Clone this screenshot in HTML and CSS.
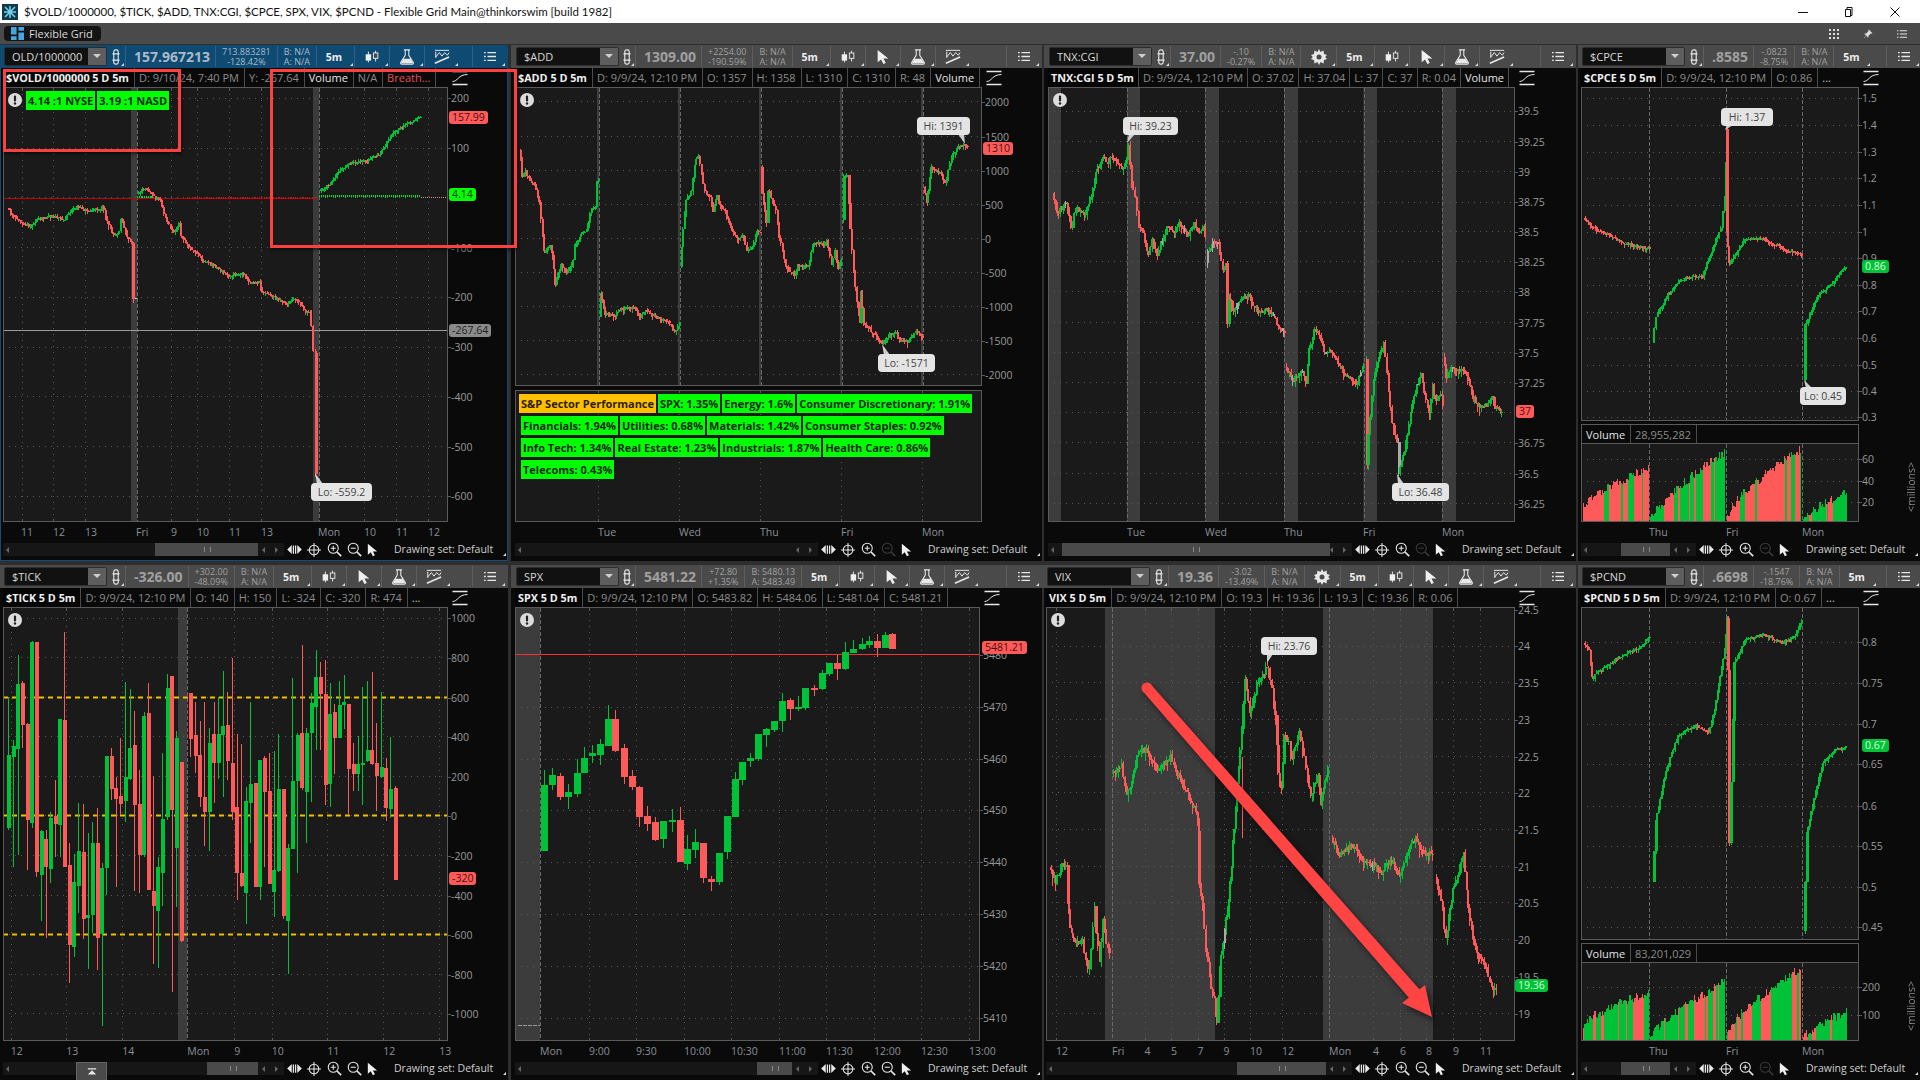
FILE: index.html
```html
<!DOCTYPE html>
<html lang="en">
<head>
<meta charset="utf-8">
<title>thinkorswim Flexible Grid</title>
<link rel="stylesheet" href="styles.css">
</head>
<body>
<svg class="sprite" aria-hidden="true">
  <symbol id="i-link" viewBox="0 0 10 18"><rect x="2.5" y="1" width="5" height="16" rx="2" fill="none" stroke="#e8e8e8" stroke-width="1.3"/><path d="M1 5.5h8M1 12.5h8" stroke="#e8e8e8" stroke-width="1.3"/></symbol>
  <symbol id="i-candle" viewBox="0 0 20 16"><path d="M6 2v12M14 1v12" stroke="#f0f0f0"/><rect x="3" y="5" width="6" height="7" fill="#f0f0f0"/><rect x="11.5" y="3.5" width="5" height="6" fill="#4a4a4a" stroke="#f0f0f0"/></symbol>
  <symbol id="i-flask" viewBox="0 0 18 18"><path d="M5.5 1h7M7 1v6L2 15c-.6 1 0 2 1 2h12c1 0 1.600-1 1-2L11 7V1" fill="none" stroke="#e8e8e8" stroke-width="1.2"/><path d="M5 11h8l3 5H2z" fill="#e8e8e8"/></symbol>
  <symbol id="i-draw" viewBox="0 0 20 18"><path d="M2 1.500h16M3 3v7M3 9l4-5 3 4 3-4 3 3 2-3" fill="none" stroke="#e8e8e8" stroke-width="1.100"/><path d="M2 16l16-7" stroke="#e8e8e8" stroke-width="1.800"/></symbol>
  <symbol id="i-menu" viewBox="0 0 14 12"><path d="M0 1.500h2M0 6h2M0 10.500h2M4 1.500h10M4 6h10M4 10.500h10" stroke="#e8e8e8" stroke-width="1.500"/></symbol>
  <symbol id="i-gear" viewBox="0 0 16 16"><path d="M8 0l1.500 3 3-1.500.5 3.400 3 1.100-1.800 2 1.800 2-3 1.100-.5 3.400-3-1.500L8 16l-1.500-3-3 1.500L3 11.100 0 10l1.800-2L0 6l3-1.100.5-3.400 3 1.500z" fill="#e8e8e8"/><circle cx="8" cy="8" r="2.500" fill="#4a4a4a"/></symbol>
  <symbol id="i-cursor" viewBox="0 0 14 18"><path d="M1 1v14l3.800-3.200L7.500 17l2.600-1.200-2.600-5H13z" fill="#f0f0f0"/></symbol>
  <symbol id="i-pan" viewBox="0 0 16 12"><path d="M0 6l5-5v10zM16 6l-5-5v10z" fill="#e8e8e8"/><path d="M6.800 1.500v9M9.200 1.500v9" stroke="#e8e8e8" stroke-width="1.400"/></symbol>
  <symbol id="i-cross" viewBox="0 0 16 16"><circle cx="8" cy="8" r="5.500" fill="none" stroke="#e8e8e8" stroke-width="1.200"/><path d="M8 0v16M0 8h16" stroke="#e8e8e8" stroke-width="1.200"/></symbol>
  <symbol id="i-zin" viewBox="0 0 18 18"><circle cx="7.500" cy="7.500" r="6" fill="none" stroke="currentColor" stroke-width="1.300"/><path d="M12 12l5 5" stroke="currentColor" stroke-width="2"/><path d="M4.500 7.500h6M7.500 4.500v6" stroke="currentColor" stroke-width="1.300"/></symbol>
  <symbol id="i-zout" viewBox="0 0 18 18"><circle cx="7.500" cy="7.500" r="6" fill="none" stroke="currentColor" stroke-width="1.300"/><path d="M12 12l5 5" stroke="currentColor" stroke-width="2"/><path d="M4.500 7.500h6" stroke="currentColor" stroke-width="1.300"/></symbol>
  <symbol id="i-scale" viewBox="0 0 16 16"><path d="M.5 1.500h15M.5 14.500h15" stroke="#e8e8e8" stroke-width="1.600"/><path d="M.5 11.500C6 11.500 6 4.500 15.500 4.500" fill="none" stroke="#e8e8e8"/></symbol>
  <symbol id="i-warn" viewBox="0 0 14 14"><circle cx="7" cy="7" r="7" fill="#dcdcdc"/><rect x="5.900" y="2.500" width="2.200" height="6" rx="1" fill="#222"/><circle cx="7" cy="10.500" r="1.200" fill="#222"/></symbol>
  <symbol id="i-up" viewBox="0 0 12 10"><path d="M1 1h10v1.500H1zM6 3.500l5 5H1z" fill="#e8e8e8"/></symbol>
</svg>

<header class="titlebar">
  <svg class="logo" viewBox="0 0 16 16"><rect width="16" height="16" fill="#12384c"/><path d="M3 3l10 10M13 3L3 13M8 2v12M2 8h12" stroke="#6fd0e8" stroke-width="1.600"/></svg>
  <span class="title-text">$VOLD/1000000, $TICK, $ADD, TNX:CGI, $CPCE, SPX, VIX, $PCND - Flexible Grid Main@thinkorswim [build 1982]</span>
  <div class="winctl">
    <svg class="win" viewBox="0 0 12 12"><path d="M1 6.500h10" stroke="#111"/></svg>
    <svg class="win" viewBox="0 0 12 12"><path d="M4 3V1.500h5v8H7.500M2.500 3.500h5v7h-5z" fill="none" stroke="#111"/></svg>
    <svg class="win" viewBox="0 0 12 12"><path d="M1.500 1.500l9 9M10.500 1.500l-9 9" stroke="#111"/></svg>
  </div>
</header>

<div class="toolbar">
  <div class="gridtab">
    <svg class="tabicon" viewBox="0 0 14 14"><path d="M0 0h6v8H0zM8 0h6v4H8zM8 6h6v8H8zM0 10h6v4H0z" fill="#45a6e0"/></svg>
    <span>Flexible Grid</span>
  </div>
  <div class="toolbar-right">
    <svg class="barico" viewBox="0 0 10 10"><path d="M0 0h2v2H0zM4 0h2v2H4zM8 0h2v2H8zM0 4h2v2H0zM4 4h2v2H4zM8 4h2v2H8zM0 8h2v2H0zM4 8h2v2H4zM8 8h2v2H8z" fill="#ddd"/></svg>
    <svg class="barico" viewBox="0 0 12 12"><path d="M7 1l4 4-2 .5L6.500 8 6 10 2 6l2-.5L6.500 3zM3 9l-2 2" fill="#ddd" stroke="#ddd" stroke-width=".6"/></svg>
    <svg class="barico" viewBox="0 0 14 12"><use href="#i-menu"/></svg>
  </div>
</div>

<main class="grid">

  <section class="panel active col-a">
    <div class="head">
      <div class="symbol"><span>OLD/1000000</span><i class="drop"></i></div>
      <div class="tool link"><svg class="ic-link"><use href="#i-link"/></svg></div>
      <div class="last">157.967213</div>
      <div class="pair"><span>713.883281</span><span>-128.42%</span></div>
      <div class="pair"><span>B: N/A</span><span>A: N/A</span></div>
      <div class="tool tf">5m</div>
      <div class="tool"><svg class="ic"><use href="#i-candle"/></svg></div>
      <div class="tool"><svg class="ic"><use href="#i-flask"/></svg></div>
      <div class="tool"><svg class="ic"><use href="#i-draw"/></svg></div>
      <div class="tool menu"><svg class="ic-menu"><use href="#i-menu"/></svg></div>
    </div>
    <div class="info">
      <div class="cells">
        <span class="cell ttl">$VOLD/1000000 5 D 5m</span><span class="cell">D: 9/10/24, 7:40 PM</span><span class="cell">Y: -267.64</span><span class="cell lit">Volume</span><span class="cell">N/A</span><span class="cell red">Breath...</span>
      </div>
      <div class="scale"><svg class="ic-scale"><use href="#i-scale"/></svg></div>
    </div>
    <div class="body">
      <div class="plots">
        <div class="plot" data-chart="vold">
          <svg class="warn"><use href="#i-warn"/></svg>
          <div class="breadth"><span class="chip">4.14 :1 NYSE</span><span class="chip">3.19 :1 NASD</span></div>
        </div>
      </div>
      <div class="axis"></div>
    </div>
    <div class="time"></div>
    <div class="scroll">
      <div class="track"><i class="arr l"></i><div class="thumb thumb-vold"></div><i class="arr r1"></i><i class="arr r2"></i></div>
      <div class="nav"><svg class="n-pan"><use href="#i-pan"/></svg><svg class="n-ic"><use href="#i-cross"/></svg><svg class="n-ic zoom"><use href="#i-zin"/></svg><svg class="n-ic zoom"><use href="#i-zout"/></svg><svg class="n-cur"><use href="#i-cursor"/></svg></div>
      <div class="drawset">Drawing set: Default</div>
    </div>
  </section>

  <section class="panel col-b">
    <div class="head">
      <div class="symbol"><span>$ADD</span><i class="drop"></i></div>
      <div class="tool link"><svg class="ic-link"><use href="#i-link"/></svg></div>
      <div class="last">1309.00</div>
      <div class="pair"><span>+2254.00</span><span>-190.59%</span></div>
      <div class="pair"><span>B: N/A</span><span>A: N/A</span></div>
      <div class="tool tf">5m</div>
      <div class="tool"><svg class="ic"><use href="#i-candle"/></svg></div>
      <div class="tool"><svg class="ic"><use href="#i-cursor"/></svg></div>
      <div class="tool"><svg class="ic"><use href="#i-flask"/></svg></div>
      <div class="tool"><svg class="ic"><use href="#i-draw"/></svg></div>
      <div class="tool menu"><svg class="ic-menu"><use href="#i-menu"/></svg></div>
    </div>
    <div class="info">
      <div class="cells">
        <span class="cell ttl">$ADD 5 D 5m</span><span class="cell">D: 9/9/24, 12:10 PM</span><span class="cell">O: 1357</span><span class="cell">H: 1358</span><span class="cell">L: 1310</span><span class="cell">C: 1310</span><span class="cell">R: 48</span><span class="cell lit">Volume</span>
      </div>
      <div class="scale"><svg class="ic-scale"><use href="#i-scale"/></svg></div>
    </div>
    <div class="body">
      <div class="plots">
        <div class="plot" data-chart="add"><svg class="warn"><use href="#i-warn"/></svg></div>
        <div class="plot study sectors" data-chart="addStudy">
          <div class="chips">
            <span class="chip head-chip">S&amp;P Sector Performance</span><span class="chip">SPX: 1.35%</span><span class="chip">Energy: 1.6%</span><span class="chip">Consumer Discretionary: 1.91%</span>
          </div>
          <div class="chips inset">
            <span class="chip">Financials: 1.94%</span><span class="chip">Utilities: 0.68%</span><span class="chip">Materials: 1.42%</span><span class="chip">Consumer Staples: 0.92%</span>
          </div>
          <div class="chips inset">
            <span class="chip">Info Tech: 1.34%</span><span class="chip">Real Estate: 1.23%</span><span class="chip">Industrials: 1.87%</span><span class="chip">Health Care: 0.86%</span>
          </div>
          <div class="chips inset">
            <span class="chip">Telecoms: 0.43%</span>
          </div>
        </div>
      </div>
      <div class="axis"></div>
    </div>
    <div class="time"></div>
    <div class="scroll">
      <div class="track"><i class="arr l"></i><i class="arr r1"></i><i class="arr r2"></i></div>
      <div class="nav"><svg class="n-pan"><use href="#i-pan"/></svg><svg class="n-ic"><use href="#i-cross"/></svg><svg class="n-ic zoom"><use href="#i-zin"/></svg><svg class="n-ic zoom dim"><use href="#i-zout"/></svg><svg class="n-cur"><use href="#i-cursor"/></svg></div>
      <div class="drawset">Drawing set: Default</div>
    </div>
  </section>

  <section class="panel col-c tnx">
    <div class="head">
      <div class="symbol"><span>TNX:CGI</span><i class="drop"></i></div>
      <div class="tool link"><svg class="ic-link"><use href="#i-link"/></svg></div>
      <div class="last">37.00</div>
      <div class="pair"><span>-.10</span><span>-0.27%</span></div>
      <div class="pair"><span>B: N/A</span><span>A: N/A</span></div>
      <div class="tool gear"><svg class="ic"><use href="#i-gear"/></svg></div>
      <div class="tool tf">5m</div>
      <div class="tool"><svg class="ic"><use href="#i-candle"/></svg></div>
      <div class="tool"><svg class="ic"><use href="#i-cursor"/></svg></div>
      <div class="tool"><svg class="ic"><use href="#i-flask"/></svg></div>
      <div class="tool"><svg class="ic"><use href="#i-draw"/></svg></div>
      <div class="tool menu"><svg class="ic-menu"><use href="#i-menu"/></svg></div>
    </div>
    <div class="info">
      <div class="cells">
        <span class="cell ttl">TNX:CGI 5 D 5m</span><span class="cell">D: 9/9/24, 12:10 PM</span><span class="cell">O: 37.02</span><span class="cell">H: 37.04</span><span class="cell">L: 37</span><span class="cell">C: 37</span><span class="cell">R: 0.04</span><span class="cell lit">Volume</span>
      </div>
      <div class="scale"><svg class="ic-scale"><use href="#i-scale"/></svg></div>
    </div>
    <div class="body">
      <div class="plots">
        <div class="plot" data-chart="tnx"><svg class="warn"><use href="#i-warn"/></svg></div>
      </div>
      <div class="axis"></div>
    </div>
    <div class="time"></div>
    <div class="scroll">
      <div class="track"><i class="arr l"></i><div class="thumb thumb-tnx"></div><i class="arr r1"></i><i class="arr r2"></i></div>
      <div class="nav"><svg class="n-pan"><use href="#i-pan"/></svg><svg class="n-ic"><use href="#i-cross"/></svg><svg class="n-ic zoom"><use href="#i-zin"/></svg><svg class="n-ic zoom dim"><use href="#i-zout"/></svg><svg class="n-cur"><use href="#i-cursor"/></svg></div>
      <div class="drawset">Drawing set: Default</div>
    </div>
  </section>

  <section class="panel col-d">
    <div class="head">
      <div class="symbol"><span>$CPCE</span><i class="drop"></i></div>
      <div class="tool link"><svg class="ic-link"><use href="#i-link"/></svg></div>
      <div class="last">.8585</div>
      <div class="pair"><span>-.0823</span><span>-8.75%</span></div>
      <div class="pair"><span>B: N/A</span><span>A: N/A</span></div>
      <div class="tool tf">5m</div>
      <div class="tool menu"><svg class="ic-menu"><use href="#i-menu"/></svg></div>
    </div>
    <div class="info">
      <div class="cells">
        <span class="cell ttl">$CPCE 5 D 5m</span><span class="cell">D: 9/9/24, 12:10 PM</span><span class="cell">O: 0.86</span><span class="cell plain">...</span>
      </div>
      <div class="scale"><svg class="ic-scale"><use href="#i-scale"/></svg></div>
    </div>
    <div class="body">
      <div class="plots">
        <div class="plot" data-chart="cpce"></div>
        <div class="studyhead"><span class="cell lit">Volume</span><span class="cell">28,955,282</span></div>
        <div class="plot volume" data-chart="cpceVol"></div>
      </div>
      <div class="axis"><span class="units">&lt;millions&gt;</span></div>
    </div>
    <div class="time"></div>
    <div class="scroll">
      <div class="track"><i class="arr l"></i><div class="thumb thumb-d"></div><i class="arr r1"></i><i class="arr r2"></i></div>
      <div class="nav"><svg class="n-pan"><use href="#i-pan"/></svg><svg class="n-ic"><use href="#i-cross"/></svg><svg class="n-ic zoom"><use href="#i-zin"/></svg><svg class="n-ic zoom dim"><use href="#i-zout"/></svg><svg class="n-cur"><use href="#i-cursor"/></svg></div>
      <div class="drawset">Drawing set: Default</div>
    </div>
  </section>

  <section class="panel bottom col-a">
    <div class="head">
      <div class="symbol"><span>$TICK</span><i class="drop"></i></div>
      <div class="tool link"><svg class="ic-link"><use href="#i-link"/></svg></div>
      <div class="last">-326.00</div>
      <div class="pair"><span>+302.00</span><span>-48.09%</span></div>
      <div class="pair"><span>B: N/A</span><span>A: N/A</span></div>
      <div class="tool tf">5m</div>
      <div class="tool"><svg class="ic"><use href="#i-candle"/></svg></div>
      <div class="tool"><svg class="ic"><use href="#i-cursor"/></svg></div>
      <div class="tool"><svg class="ic"><use href="#i-flask"/></svg></div>
      <div class="tool"><svg class="ic"><use href="#i-draw"/></svg></div>
      <div class="tool menu"><svg class="ic-menu"><use href="#i-menu"/></svg></div>
    </div>
    <div class="info">
      <div class="cells">
        <span class="cell ttl">$TICK 5 D 5m</span><span class="cell">D: 9/9/24, 12:10 PM</span><span class="cell">O: 140</span><span class="cell">H: 150</span><span class="cell">L: -324</span><span class="cell">C: -320</span><span class="cell">R: 474</span><span class="cell plain">...</span>
      </div>
      <div class="scale"><svg class="ic-scale"><use href="#i-scale"/></svg></div>
    </div>
    <div class="body">
      <div class="plots">
        <div class="plot" data-chart="tick"><svg class="warn"><use href="#i-warn"/></svg></div>
      </div>
      <div class="axis"></div>
    </div>
    <div class="time"></div>
    <div class="scroll">
      <div class="track"><i class="arr l"></i><div class="thumb thumb-tick"></div><i class="arr r1"></i><i class="arr r2"></i></div>
      <div class="nav"><svg class="n-pan"><use href="#i-pan"/></svg><svg class="n-ic"><use href="#i-cross"/></svg><svg class="n-ic zoom"><use href="#i-zin"/></svg><svg class="n-ic zoom"><use href="#i-zout"/></svg><svg class="n-cur"><use href="#i-cursor"/></svg></div>
      <div class="drawset">Drawing set: Default</div>
    </div>
    <div class="collapse"><svg class="ic-up"><use href="#i-up"/></svg></div>
  </section>

  <section class="panel bottom col-b spx">
    <div class="head">
      <div class="symbol"><span>SPX</span><i class="drop"></i></div>
      <div class="tool link"><svg class="ic-link"><use href="#i-link"/></svg></div>
      <div class="last">5481.22</div>
      <div class="pair"><span>+72.80</span><span>+1.35%</span></div>
      <div class="pair"><span>B: 5480.13</span><span>A: 5483.49</span></div>
      <div class="tool tf">5m</div>
      <div class="tool"><svg class="ic"><use href="#i-candle"/></svg></div>
      <div class="tool"><svg class="ic"><use href="#i-cursor"/></svg></div>
      <div class="tool"><svg class="ic"><use href="#i-flask"/></svg></div>
      <div class="tool"><svg class="ic"><use href="#i-draw"/></svg></div>
      <div class="tool menu"><svg class="ic-menu"><use href="#i-menu"/></svg></div>
    </div>
    <div class="info">
      <div class="cells">
        <span class="cell ttl">SPX 5 D 5m</span><span class="cell">D: 9/9/24, 12:10 PM</span><span class="cell">O: 5483.82</span><span class="cell">H: 5484.06</span><span class="cell">L: 5481.04</span><span class="cell">C: 5481.21</span>
      </div>
      <div class="scale"><svg class="ic-scale"><use href="#i-scale"/></svg></div>
    </div>
    <div class="body">
      <div class="plots">
        <div class="plot" data-chart="spx"><svg class="warn"><use href="#i-warn"/></svg></div>
      </div>
      <div class="axis"></div>
    </div>
    <div class="time"></div>
    <div class="scroll">
      <div class="track"><i class="arr l"></i><div class="thumb thumb-spx"></div><i class="arr r1"></i><i class="arr r2"></i></div>
      <div class="nav"><svg class="n-pan"><use href="#i-pan"/></svg><svg class="n-ic"><use href="#i-cross"/></svg><svg class="n-ic zoom"><use href="#i-zin"/></svg><svg class="n-ic zoom"><use href="#i-zout"/></svg><svg class="n-cur"><use href="#i-cursor"/></svg></div>
      <div class="drawset">Drawing set: Default</div>
    </div>
  </section>

  <section class="panel bottom col-c vix">
    <div class="head">
      <div class="symbol"><span>VIX</span><i class="drop"></i></div>
      <div class="tool link"><svg class="ic-link"><use href="#i-link"/></svg></div>
      <div class="last">19.36</div>
      <div class="pair"><span>-3.02</span><span>-13.49%</span></div>
      <div class="pair"><span>B: N/A</span><span>A: N/A</span></div>
      <div class="tool gear"><svg class="ic"><use href="#i-gear"/></svg></div>
      <div class="tool tf">5m</div>
      <div class="tool"><svg class="ic"><use href="#i-candle"/></svg></div>
      <div class="tool"><svg class="ic"><use href="#i-cursor"/></svg></div>
      <div class="tool"><svg class="ic"><use href="#i-flask"/></svg></div>
      <div class="tool"><svg class="ic"><use href="#i-draw"/></svg></div>
      <div class="tool menu"><svg class="ic-menu"><use href="#i-menu"/></svg></div>
    </div>
    <div class="info">
      <div class="cells">
        <span class="cell ttl">VIX 5 D 5m</span><span class="cell">D: 9/9/24, 12:10 PM</span><span class="cell">O: 19.3</span><span class="cell">H: 19.36</span><span class="cell">L: 19.3</span><span class="cell">C: 19.36</span><span class="cell">R: 0.06</span>
      </div>
      <div class="scale"><svg class="ic-scale"><use href="#i-scale"/></svg></div>
    </div>
    <div class="body">
      <div class="plots">
        <div class="plot" data-chart="vix"><svg class="warn"><use href="#i-warn"/></svg></div>
      </div>
      <div class="axis"></div>
    </div>
    <div class="time"></div>
    <div class="scroll">
      <div class="track"><i class="arr l"></i><div class="thumb thumb-vix"></div><i class="arr r1"></i><i class="arr r2"></i></div>
      <div class="nav"><svg class="n-pan"><use href="#i-pan"/></svg><svg class="n-ic"><use href="#i-cross"/></svg><svg class="n-ic zoom"><use href="#i-zin"/></svg><svg class="n-ic zoom"><use href="#i-zout"/></svg><svg class="n-cur"><use href="#i-cursor"/></svg></div>
      <div class="drawset">Drawing set: Default</div>
    </div>
  </section>

  <section class="panel bottom col-d">
    <div class="head">
      <div class="symbol"><span>$PCND</span><i class="drop"></i></div>
      <div class="tool link"><svg class="ic-link"><use href="#i-link"/></svg></div>
      <div class="last">.6698</div>
      <div class="pair"><span>-.1547</span><span>-18.76%</span></div>
      <div class="pair"><span>B: N/A</span><span>A: N/A</span></div>
      <div class="tool tf">5m</div>
      <div class="tool menu"><svg class="ic-menu"><use href="#i-menu"/></svg></div>
    </div>
    <div class="info">
      <div class="cells">
        <span class="cell ttl">$PCND 5 D 5m</span><span class="cell">D: 9/9/24, 12:10 PM</span><span class="cell">O: 0.67</span><span class="cell plain">...</span>
      </div>
      <div class="scale"><svg class="ic-scale"><use href="#i-scale"/></svg></div>
    </div>
    <div class="body">
      <div class="plots">
        <div class="plot" data-chart="pcnd"></div>
        <div class="studyhead"><span class="cell lit">Volume</span><span class="cell">83,201,029</span></div>
        <div class="plot volume" data-chart="pcndVol"></div>
      </div>
      <div class="axis"><span class="units">&lt;millions&gt;</span></div>
    </div>
    <div class="time"></div>
    <div class="scroll">
      <div class="track"><i class="arr l"></i><div class="thumb thumb-d"></div><i class="arr r1"></i><i class="arr r2"></i></div>
      <div class="nav"><svg class="n-pan"><use href="#i-pan"/></svg><svg class="n-ic"><use href="#i-cross"/></svg><svg class="n-ic zoom"><use href="#i-zin"/></svg><svg class="n-ic zoom dim"><use href="#i-zout"/></svg><svg class="n-cur"><use href="#i-cursor"/></svg></div>
      <div class="drawset">Drawing set: Default</div>
    </div>
  </section>
</main>

<div class="markup box-one"></div>
<div class="markup box-two"></div>
<svg class="arrow" viewBox="0 0 1920 1080">
  <circle cx="1147" cy="688" r="5.500" fill="#ff4444"/>
  <path d="M1143 691.500 1151 684.500 1420 990 1410 999zM1402 1003 1425 985 1432 1017z" fill="#ff4444"/>
</svg>

<script src="app.js"></script>
</body>
</html>
```

FILE: styles.css
```css
* { box-sizing: border-box; }
html, body { margin: 0; padding: 0; }
body {
  width: 1920px; height: 1080px; overflow: hidden; position: relative;
  background: #2e2e2e; color: #999;
  font-family: "Open Sans", "Liberation Sans", sans-serif; font-size: 10.5px;
}
.sprite { display: none; }

.titlebar {
  height: 23px; background: #fff; color: #111; display: flex; align-items: center;
  font-family: "Lato", "Open Sans", sans-serif; font-size: 11.5px;
}
.logo { width: 16px; height: 16px; margin: 0 6px 0 2px; }
.title-text { flex: 1; }
.winctl { display: flex; gap: 34px; padding-right: 19px; }
.win { width: 12px; height: 12px; }

.toolbar {
  height: 21px; background: #4a4a4a; display: flex; align-items: center; justify-content: space-between;
  padding-left: 4px;
}
.gridtab {
  width: 97px; height: 15px; background: #141414; border-radius: 4px; color: #d8d8d8;
  display: flex; align-items: center; gap: 5px; padding-left: 7px; font-size: 11px;
}
.tabicon { width: 13px; height: 13px; }
.toolbar-right { display: flex; align-items: center; gap: 24px; padding-right: 13px; }
.barico { width: 10px; height: 10px; }

.grid {
  display: grid; height: 1036px;
  grid-template-columns: 510px 533px 535px 342px;
  grid-template-rows: 520px 516px;
}
.panel {
  position: relative; display: flex; flex-direction: column; min-width: 0;
  margin-top: 1px; margin-bottom: 3px; padding-bottom: 5px; background: #0a0a0a;
  --axis: 60px;
}
.panel.bottom { margin-bottom: 0; }
.col-a { padding-left: 3px; margin-right: 2px; }
.col-b { padding-left: 4px; margin-left: 1px; margin-right: 1px; }
.col-c { padding-left: 4px; margin-left: 1px; margin-right: 2px; --axis: 61px; }
.col-d { padding-left: 3px; --axis: 61px; }
.spx { --axis: 62px; }
.vix { padding-left: 2px; }
.panel.active { box-shadow: inset 1px 0 0 #0e4e78, inset -1px 0 0 #0e4e78, inset 0 -1px 0 #0e4e78; }

.head {
  height: 23px; flex: none; display: flex; align-items: stretch; background: #4a4a4a;
  margin-left: -3px; padding-left: 4px; padding-top: 1px; padding-bottom: 1px;
  color: #a0a0a0;
}
.panel:not(.col-a):not(.col-d) .head { margin-left: -4px; padding-left: 5px; }
.active .head { background: #0e4a72; color: #a9bbc9; }
.symbol {
  width: 103px; background: #111; border: 1px solid #2c2c2c; border-radius: 2px; color: #d8d8d8;
  display: flex; align-items: center; justify-content: space-between; padding-left: 7px;
  font-size: 11px; margin: 1px 0;
}
.drop {
  width: 18px; height: 100%; background: #5e5e5e; position: relative; display: block;
}
.drop::after {
  content: ""; position: absolute; left: 5px; top: 6px;
  border-left: 4px solid transparent; border-right: 4px solid transparent; border-top: 4px solid #cfcfcf;
}
.tool {
  width: 35px; display: flex; align-items: center; justify-content: center; position: relative;
  border-left: 1px solid #5e5e5e; color: #eee; font-weight: 700; font-size: 10.5px;
}
.active .tool { border-left-color: #2c6288; }
.tool::after {
  content: ""; position: absolute; right: 1px; bottom: 1px; border-left: 3px solid transparent; border-bottom: 3px solid #ddd;
}
.link { width: 18px; border-left: 0; }
.col-b .link { width: 16px; }
.tf { width: 38px; padding-right: 3px; }
.gear { width: 31px; }
.col-c .gear { width: 36px; }
.menu { margin-left: auto; margin-right: 2px; width: 34px; }
.col-d .menu { margin-right: 0; }
.ic { width: 18px; height: 16px; }
.ic-link { width: 10px; height: 16px; }
.ic-menu { width: 12px; height: 11px; }
.last {
  display: flex; align-items: center; padding: 0 5px 0 8px; border-left: 1px solid #5e5e5e;
  font-size: 14px; font-weight: 700;
}
.active .last, .active .pair { border-left-color: #2c6288; }
.pair {
  display: flex; flex-direction: column; align-items: center; justify-content: center; padding: 0 6px;
  border-left: 1px solid #5e5e5e; font-size: 9px; line-height: 10px;
}

.info { height: 20px; flex: none; display: flex; }
.cells {
  flex: 1; display: flex; min-width: 0; overflow: hidden; background: #0a0a0a;
  border-bottom: 1px solid #5a5a5a;
}
.cell {
  display: flex; align-items: center; padding: 0 5px 0 4px; border-right: 1px solid #4c4c4c;
  color: #8c8c8c; font-size: 11px; white-space: nowrap;
}
.tnx .cell { padding-right: 4px; }
.cell.ttl { color: #f0f0f0; font-weight: 700; font-size: 10.8px; padding-left: 3px; background: #050505; }
.cell.lit { color: #e4e4e4; }
.cell.red { color: #e0525a; }
.cell.plain { border-right: 0; color: #c8c8c8; }
.scale { width: var(--axis); display: flex; align-items: center; padding-left: 4px; }
.ic-scale { width: 16px; height: 16px; }

.body { flex: 1; min-height: 0; display: flex; }
.plots { flex: 1; min-width: 0; display: flex; flex-direction: column; }
.plot {
  flex: 1; min-height: 0; position: relative; overflow: hidden; background: #1a1a1a;
  border: 1px solid #5a5a5a; border-top: 0;
}
.plotsvg { position: absolute; left: -1px; top: 0; display: block; }
.study .plotsvg { top: -1px; }
.plotsvg .crisp { shape-rendering: crispEdges; }
.study { flex: none; height: 132px; margin-top: 4px; border-top: 1px solid #5a5a5a; }
.volume { flex: none; height: 78px; }
.studyhead {
  flex: none; height: 20px; margin-top: 3px; display: flex; background: #0a0a0a;
  border: 1px solid #5a5a5a;
}
.axis { width: var(--axis); position: relative; flex: none; }
.units {
  position: absolute; right: 2px; bottom: 10px; writing-mode: vertical-rl; transform: rotate(180deg);
  color: #8a8a8a; font-size: 10.5px;
}
.ylab {
  position: absolute; left: 3px; transform: translateY(-50%); color: #999; font-size: 10.5px; line-height: 12px; white-space: nowrap;
}
.ylab::before {
  content: ""; position: absolute; left: -3px; top: 6px; width: 3px; height: 1px; background: #5a5a5a;
}

.time { height: 21px; flex: none; position: relative; }
.xlab {
  position: absolute; top: 3px; color: #8a9097; font-size: 10.5px; line-height: 14px; white-space: nowrap;
}

.scroll { height: 13px; flex: none; display: flex; align-items: center; }
.track { flex: 1; min-width: 0; height: 13px; background: #161616; position: relative; }
.thumb { position: absolute; top: 0; height: 13px; background: #4a4a4a; }
.thumb::after {
  content: ""; position: absolute; left: 50%; top: 4px; width: 5px; height: 5px; margin-left: -3px;
  border-left: 1px solid #888; border-right: 1px solid #888;
}
.thumb-vold { left: 152px; right: 26px; }
.thumb-tick { left: 204px; right: 26px; }
.thumb-tnx { left: 14px; right: 22px; }
.thumb-spx { left: 242px; right: 26px; }
.thumb-vix { left: 191px; right: 26px; }
.thumb-d { left: 40px; right: 26px; }
.arr { position: absolute; top: 4px; border-top: 3px solid transparent; border-bottom: 3px solid transparent; }
.arr.l { left: 3px; border-right: 3px solid #666; }
.arr.r1 { right: 19px; border-right: 3px solid #666; }
.arr.r2 { right: 6px; border-left: 3px solid #666; }
.nav { width: 94px; display: flex; align-items: center; justify-content: space-between; padding: 0 0 0 3px; color: #e8e8e8; }
.n-pan { width: 15px; height: 11px; }
.n-ic { width: 14px; height: 14px; }
.n-ic.zoom { width: 15px; height: 15px; }
.n-ic.dim { color: #3a3a3a; }
.n-cur { width: 11px; height: 14px; }
.drawset {
  width: 130px; padding-left: 16px; color: #cfcfcf; font-size: 10.5px; line-height: 13px; white-space: nowrap; position: relative;
}
.drawset::after {
  content: ""; position: absolute; right: 2px; bottom: 0; border-left: 3px solid transparent; border-bottom: 3px solid #ddd;
}
.collapse {
  position: absolute; left: 76px; bottom: 0; width: 31px; height: 18px; background: #4a4a4a; border: 1px solid #666; border-bottom: 0;
  display: flex; align-items: center; justify-content: center;
}
.ic-up { width: 10px; height: 9px; }

.warn { position: absolute; left: 4px; top: 5px; width: 14px; height: 14px; }
.breadth { position: absolute; left: 22px; top: 3px; display: flex; gap: 2px; }
.chip {
  background: #00ff00; color: #0a2a0a; font-weight: 700; font-size: 11px; line-height: 19px; padding: 0 2px; white-space: nowrap;
}
.head-chip { background: #ffc000; color: #2a2000; }
.sectors { padding: 3px 0 0 3px; display: flex; flex-direction: column; gap: 3px; flex: none; }
.chips { display: flex; gap: 2px; position: relative; }
.chips.inset { padding-left: 2px; }

.bubble {
  position: absolute; background: #e4e4e4; color: #444; border-radius: 4px; text-align: center;
  font-size: 10.5px; line-height: 18px; height: 18px; white-space: nowrap;
}
.ptag {
  position: absolute; border-radius: 3px; padding: 0 3px; font-size: 10.5px; line-height: 13px; height: 13px; white-space: nowrap; color: #4a1010;
}
.ptag.red { background: #ff5a5a; }
.ptag.green { background: #00c238; color: #d8ffd8; }
.ptag.lime { background: #00ff00; color: #083008; }
.ptag.gray { background: #8a8a8a; color: #222; }

.markup { position: absolute; border: 3px solid #ff4040; box-shadow: 1px 2px 3px rgba(0,0,0,.5); pointer-events: none; }
.box-one { left: 3px; top: 69px; width: 178px; height: 83px; }
.box-two { left: 270px; top: 69px; width: 247px; height: 179px; }
.arrow { position: absolute; left: 0; top: 0; width: 1920px; height: 1080px; pointer-events: none; filter: drop-shadow(3px 4px 3px rgba(0,0,0,.55)); }
```

FILE: app.js
```js
const GREEN = '#00c238', RED = '#ff5a5a', BAND = '#3c3c3c', GRID = '#5a5a5a';
let seed = 11;
const rnd = () => (seed = (seed * 16807) % 2147483647) / 2147483647;
const conv = (ox, oy, sx, sy) => segs => segs.map(s => s.map(([x, y]) => [ox + x / sx, oy + y / (sy || sx)]));
const rect = (x, y, w, h, c) => `<rect x="${x.toFixed(2)}" y="${y.toFixed(2)}" width="${w}" height="${h.toFixed(2)}" fill="${c}"/>`;

function walk(segs, o = {}) {
  const pitch = o.pitch || 1.7, w = o.w || 2, noise = o.noise == null ? 3 : o.noise, gray = o.gray || 0;
  let out = '';
  segs.forEach(pts => {
    let prev = pts[0][1];
    for (let i = 1; i < pts.length; i++) {
      const [x0, y0] = pts[i - 1], [x1, y1] = pts[i];
      const n = Math.max(1, Math.round((x1 - x0) / pitch));
      for (let j = 1; j <= n; j++) {
        const x = x0 + (x1 - x0) * j / n;
        const y = y0 + (y1 - y0) * j / n + (rnd() - .5) * noise;
        const top = Math.min(prev, y), bot = Math.max(prev, y);
        const c = rnd() < gray ? '#aaaaaa' : (y < prev ? GREEN : RED);
        const big = bot - top > 25 ? 1 : 0;
        out += rect(x, top - rnd() * noise * .8, 1, bot - top + rnd() * noise * 1.6 + 1, c);
        out += rect(x - (w - 1) / 2, top, w + big, Math.max(1.6, bot - top), c);
        prev = y;
      }
    }
  });
  return out;
}

function candles(list, ox, oy, sx, sy, w) {
  return list.map(([x, g, wt, wb, bt, bb]) => {
    const c = g ? GREEN : RED, px = ox + x / sx;
    return rect(Math.round(px), oy + wt / sy, 1, (wb - wt) / sy, c) +
      rect(Math.round(px - (w - 1) / 2), oy + bt / sy, w, Math.max(1, (bb - bt) / sy), c);
  }).join('');
}

function volBars(segs, base, pitch) {
  let out = '';
  segs.forEach(([x0, x1, y0, y1, pG0, pG1]) => {
    const n = Math.round((x1 - x0) / pitch);
    let run = 0, col = RED;
    for (let i = 0; i <= n; i++) {
      const t = i / n, x = x0 + (x1 - x0) * t;
      const top = y0 + (y1 - y0) * Math.pow(t, .75) + (rnd() - .3) * 9;
      if (run-- <= 0) {
        const pg = pG0 + (pG1 - pG0) * t;
        col = rnd() < pg ? GREEN : RED;
        run = Math.floor(rnd() * 4);
      }
      out += rect(x, top, 1.3, Math.max(0, base - top), col);
    }
  });
  return out;
}

const z7 = conv(0, 160, 3), z9 = conv(510, 70, 2.958, 3), z12 = conv(1040, 100, 2.958, 3), z11 = conv(1040, 600, 2.958, 3), ref = conv(0, 0, 1 / 1.2245);

const TICK = [[25,1,290,690,465,685],[39,1,420,800,438,470],[53,1,165,765,252,448],[66,0,243,445,250,375],[81,0,370,810,372,660],[95,1,123,685,126,670],[108,0,126,832,126,815],[123,1,690,962,693,825],[137,0,690,1015,718,800],[150,1,636,850,654,806],[165,0,540,770,648,672],[179,1,357,770,357,675],[193,0,96,800,360,800],[207,0,730,1148,795,1035],[221,1,762,1072,846,1040],[235,1,610,940,753,858],[249,0,612,1018,756,957],[263,1,700,1108,945,955],[277,1,665,1000,729,945],[291,0,624,1110,729,1014],[305,1,790,1277,804,1002],[319,1,468,885,468,804],[333,0,445,600,468,567],[347,0,530,860,564,597],[361,0,415,645,588,612],[375,1,245,665,531,603],[389,1,267,540,444,537],[403,0,333,873,435,615],[417,0,510,880,612,765],[431,1,335,770,348,765],[445,0,250,870,339,870],[459,0,528,1092,873,918],[473,1,770,1103,801,933],[487,1,460,918,657,819],[501,1,222,660,264,651],[515,0,228,1175,228,630],[528,1,393,920,414,744],[543,0,486,1025,486,1023],[570,0,280,470,279,417],[585,0,305,520,405,468],[599,0,363,620,465,591],[612,0,305,738,591,636],[627,1,385,752,429,636],[641,0,305,610,402,489],[654,1,290,537,402,489],[668,1,212,590,378,405],[682,0,277,540,375,483],[696,0,173,660,489,636],[710,0,402,900,621,819],[723,0,432,860,819,858],[737,1,560,972,603,879],[751,1,306,730,552,609],[765,0,550,860,549,861],[779,1,480,900,480,861],[793,0,467,800,474,576],[807,0,460,852,573,852],[821,1,452,950,810,876],[835,1,402,815,567,813],[849,0,567,958,567,948],[863,1,732,1122,744,963],[877,1,234,748,543,747],[891,1,400,820,405,543],[905,0,135,570,399,565],[919,1,385,730,399,576],[933,1,280,605,309,399],[947,1,150,450,231,321],[961,0,186,450,231,282],[975,0,180,615,282,555],[989,1,250,620,342,552],[1003,0,312,522,336,414],[1017,1,243,414,315,414],[1031,1,225,388,306,316],[1045,0,312,642,312,507],[1059,0,430,573,492,522],[1073,1,408,573,492,522],[1087,1,261,615,489,495],[1101,1,243,486,450,483],[1115,0,216,495,450,492],[1129,0,369,633,489,528],[1143,1,276,535,501,531],[1157,0,474,662,504,624],[1171,1,411,654,567,627],[1185,0,558,840,564,840]];

const SPX = [[102,1,510,752,556,752],[125,1,505,570,526,556],[149,0,520,600,529,590],[173,1,552,628,577,590],[197,1,478,590,520,582],[220,1,442,520,474,518],[244,1,436,488,459,467],[267,1,418,495,433,465],[291,1,316,437,357,437],[312,0,330,455,357,452],[336,0,433,552,445,530],[360,0,510,570,528,560],[383,0,558,680,562,651],[406,0,618,692,648,671],[430,0,652,722,667,719],[454,1,663,744,664,716],[478,1,628,695,660,666],[502,0,622,785,661,785],[525,1,705,810,748,791],[548,1,688,774,727,749],[571,0,730,850,730,833],[594,0,829,872,838,846],[617,1,760,854,760,846],[641,1,648,776,649,755],[665,1,516,652,538,651],[687,1,487,554,487,539],[711,1,460,500,474,482],[735,1,402,482,402,476],[758,1,385,440,388,404],[782,1,362,395,364,390],[806,1,280,395,304,362],[829,0,295,360,301,326],[851,1,288,332,322,328],[874,1,264,330,264,324],[898,0,255,288,264,269],[922,1,210,270,220,266],[945,1,189,228,190,221],[968,0,165,240,190,206],[992,1,126,210,157,206],[1016,1,120,158,147,158],[1040,1,114,150,132,148],[1063,1,108,144,123,135],[1087,0,102,170,123,144],[1110,1,97,144,105,143],[1131,0,100,147,102,147]];

const CHARTS = {
  vold: {
    hg: [98,148,197,247,297,347,396,446,496],
    vg: [21.7,53,85,171,197,229,261,364,396,428], bands: [[131,137],[313,319]], vd: [137,319],
    yl: [['200',98],['100',148],['-100',248],['-200',297],['-300',347],['-400',397],['-500',447],['-600',496]],
    xl: [['11',21],['12',53],['13',85],['Fri',136],['9',171],['10',197],['11',229],['13',261],['Mon',318],['10',364],['11',396],['12',428]],
    hl: [[197.5,'#c00000',3,316,0],[330,'#9a9a9a',3,447,0],[297.500,'#cccccc',133,137,0]],
    draw() {
      let s = '';
      for (let x = 187; x < 317; x += 2.4) s += rect(x, 197, 1, 2, '#d01010');
      for (let x = 137; x < 152; x += 1.800) s += rect(x, 196, 1, 2, '#00e030');
      for (let x = 319; x < 421; x += 2) s += rect(x, 195, 1, 2 + (x % 5 < 1 ? 1 : 0), '#00e030');
      for (let x = 421; x < 446; x += 2) s += rect(x, 197, 1, 1, '#c89090');
      return s + walk(z7([
        [[20,145],[35,165],[60,185],[90,198],[105,180],[125,175],[145,165],[190,178],[210,150],[230,140],[265,152],[300,145],[305,135],[320,185],[340,225],[355,215],[362,175],[380,230],[395,250],[398,415]],
        [[410,100],[435,82],[460,110],[480,120],[490,165],[520,215],[535,190],[540,225],[570,265],[595,285],[605,300],[640,315],[680,345],[730,340],[745,368],[775,365],[785,395],[830,415],[860,430],[880,415],[900,425],[915,460],[930,455],[932,500],[938,575],[945,580],[945,940]],
        [[958,92],[985,75],[1015,30],[1045,10],[1100,0],[1140,-20],[1175,-80],[1220,-110],[1260,-128]]
      ]), { noise: 2.5, w: 2, pitch: 1.6 });
    },
    bubbles: [{ t: 'Lo: -559.2', x: 311, y: 483, w: 61, px: 315, py: 473 }],
    tags: [{ t: '157.99', x: 449, y: 111, c: 'red' }, { t: '4.14', x: 449, y: 188, c: 'lime' }, { t: '-267.64', x: 449, y: 324, c: 'gray' }]
  },
  add: {
    hg: [101,136,170,204,238,272,306,340,374],
    bands: [[597,599],[678,680],[759,761],[840,842],[921,923]], vd: [599,680,761,842,923],
    yl: [['2000',102],['1500',137],['1000',171],['500',205],['0',239],['-500',273],['-1000',307],['-1500',341],['-2000',375]],
    xl: [['Tue',598],['Wed',679],['Thu',760],['Fri',841],['Mon',922]],
    draw() {
      return walk(z9([
        [[25,240],[30,260],[35,320],[45,300],[55,325],[70,345],[85,400],[95,500],[100,545],[118,525],[125,560],[133,640],[145,600],[150,580],[165,610],[185,570],[190,530],[210,490],[225,480],[235,430],[250,410],[255,340],[260,335]],
        [[265,740],[268,670],[280,730],[310,738],[320,718],[365,712],[385,740],[400,722],[430,740],[470,760],[490,785],[500,758]],
        [[502,590],[510,480],[520,385],[535,365],[545,285],[555,255],[565,310],[575,365],[590,385],[600,425],[612,375],[620,405],[635,420],[660,495],[675,510],[685,490],[700,540],[715,530],[730,480],[740,490]],
        [[742,290],[745,370],[757,460],[762,360],[775,395],[785,420],[795,500],[805,545],[815,590],[840,615],[850,585],[880,590],[895,525],[910,515],[925,525],[935,510],[950,585],[960,540],[970,600],[978,570]],
        [[982,450],[985,320],[995,320],[1005,480],[1015,600],[1025,700],[1035,755],[1037,660],[1045,760],[1075,790],[1100,820],[1120,795],[1140,790],[1150,805],[1175,818],[1195,790],[1205,785],[1220,800]],
        [[1222,350],[1232,395],[1245,290],[1270,310],[1285,340],[1295,300],[1305,260],[1320,235],[1345,222],[1352,235]]
      ]), { noise: 3, w: 2, pitch: 1.5 });
    },
    bubbles: [{ t: 'Hi: 1391', x: 917, y: 117, w: 53, px: 965, py: 144 }, { t: 'Lo: -1571', x: 878, y: 354, w: 57, px: 882, py: 344 }],
    tags: [{ t: '1310', x: 983, y: 142, c: 'red' }]
  },
  addStudy: { vg: [598,679,760,841,922] },
  tnx: {
    hg: [110.5,141,171,201.500,231,261,291,322,352,382,412,442,473,503],
    bands: [[1048,1061],[1127,1140],[1205,1219],[1284,1298],[1363.5,1377],[1442,1456]], vd: [1127,1205,1284,1363.5,1442],
    yl: [['39.5',111],['39.25',142],['39',172],['38.75',202],['38.5',232],['38.25',262],['38',292],['37.75',323],['37.5',353],['37.25',383],['36.75',443],['36.5',474],['36.25',504]],
    xl: [['Tue',1127],['Wed',1205],['Thu',1284],['Fri',1363],['Mon',1442]],
    draw() {
      return walk(z12([
        [[35,280],[50,340],[75,305],[80,325],[90,385],[105,320],[130,345],[150,290],[165,215],[185,170],[200,190],[207,170],[230,190],[245,210],[255,175],[260,140],[270,255],[280,290],[290,380],[300,385],[320,470],[330,420],[345,465],[360,420],[375,380],[395,395],[410,365],[435,405],[455,370],[470,400],[485,380],[488,410]],
        [[492,490],[495,455],[510,430],[525,430],[540,510],[550,490],[552,670],[558,590],[570,630],[590,600],[615,585],[630,620],[650,635],[670,630],[690,650],[705,680],[722,690]],
        [[725,800],[745,840],[775,815],[785,850],[795,745],[810,690],[825,700],[840,760],[855,750],[880,790],[900,820],[935,850],[955,800]],
        [[960,910],[965,775],[966,1090],[970,1000],[985,840],[1000,770],[1015,730],[1025,820],[1040,970],[1055,1020],[1060,1120],[1068,1090],[1085,1010],[1100,910],[1125,815],[1135,880],[1150,945],[1160,855],[1170,905],[1188,880],[1190,920]],
        [[1192,770],[1200,830],[1215,795],[1240,815],[1255,810],[1280,890],[1300,920],[1320,915],[1335,890],[1345,920],[1365,935]]
      ]), { noise: 4.5, w: 2, pitch: 1.5, gray: .05 });
    },
    bubbles: [{ t: 'Hi: 39.23', x: 1123, y: 117, w: 55, px: 1127, py: 143 }, { t: 'Lo: 36.48', x: 1392, y: 483, w: 57, px: 1397, py: 474 }],
    tags: [{ t: '37', x: 1516, y: 405, c: 'red' }]
  },
  cpce: {
    hg: [98,125,151.500,178,205,231.500,258,285,311.500,338,365,391,417],
    vd: [1649,1726,1802],
    yl: [['1.5',98],['1.4',125],['1.3',152],['1.2',178],['1.1',205],['1',232],['0.9',258],['0.8',285],['0.7',311],['0.6',338],['0.5',365],['0.4',391],['0.3',417]],
    xl: [['Thu',1649],['Fri',1726],['Mon',1802]],
    draw() {
      return walk(ref([
        [[1293,178],[1300,185],[1325,198],[1347,203]],
        [[1349,280],[1352,258],[1362,240],[1372,228],[1390,225],[1405,185],[1408,160],[1410,105],[1410,190],[1412,215],[1425,195],[1440,195],[1460,205],[1471,207]],
        [[1473,310],[1474,265],[1485,240],[1495,232],[1507,218]]
      ]), { noise: 2.5, w: 2, pitch: 1.5 });
    },
    bubbles: [{ t: 'Hi: 1.37', x: 1721, y: 108, w: 52, px: 1725, py: 130 }, { t: 'Lo: 0.45', x: 1800, y: 387, w: 46, px: 1804, py: 380 }],
    tags: [{ t: '0.86', x: 1862, y: 260, c: 'green' }]
  },
  cpceVol: {
    hg: [459,481,502], vd: [1649,1726,1802],
    yl: [['60',459],['40',481],['20',502]],
    draw() {
      return volBars([[1583,1648,505,466,.05,.3],[1650,1724,519,450,.85,.7],[1727,1800,513,447,.1,.5],[1803,1846,518,490,.85,.75]], 522, 1.25);
    }
  },
  tick: {
    hg: [618,657,697,736,776,815,855,895,934,974,1013],
    vg: [10.7,66.300,122.300,234.300,271.700,327.300,383.300,439.300], bands: [[178,187]], vd: [187],
    yl: [['1000',618],['800',658],['600',698],['400',737],['200',777],['0',816],['-200',856],['-400',896],['-600',935],['-800',975],['-1000',1014]],
    xl: [['12',10.7],['13',66.3],['14',122.3],['Mon',187.3],['9',234.3],['10',271.7],['11',327.3],['12',383.3],['13',439.3]],
    hl: [[697,'#f0c000',3,447,'5 4',2],[815,'#f0c000',3,447,'5 4',2],[934,'#f0c000',3,447,'5 4',2]],
    draw() { return candles(TICK, 0, 600, 3, 3, 4); },
    tags: [{ t: '-320', x: 449, y: 872, c: 'red' }]
  },
  spx: {
    hg: [707,759,810,862,914,966,1018],
    vg: [589,636,684,731,779,826,874,921,969], bands: [[515,540]], vd: [540],
    yl: [['5480',655],['5470',707],['5460',759],['5450',810],['5440',862],['5430',914],['5420',966],['5410',1018]],
    xl: [['Mon',540],['9:00',589],['9:30',636],['10:00',684],['10:30',731],['11:00',779],['11:30',826],['12:00',874],['12:30',921],['13:00',969]],
    hl: [[654,'#ff3030',515,980,0],[1025,'#999999',518,540,'4 1']],
    draw() { return candles(SPX, 510, 600, 2.958, 3, 7); },
    tags: [{ t: '5481.21', x: 982, y: 641, c: 'red' }]
  },
  vix: {
    hg: [646,682,719,756,792,829,866,902,939,976,1013],
    vg: [1056,1144.500,1171,1197.500,1223.500,1250.300,1282.400,1373.300,1400.400,1426.400,1453.400,1479.700],
    bands: [[1105,1215],[1323,1433]], vd: [1112,1329.400],
    yl: [['24.5',610],['24',646],['23.5',683],['23',720],['22.5',757],['22',793],['21.5',830],['21',867],['20.5',903],['20',940],['19.5',977],['19',1014]],
    xl: [['12',1056],['Fri',1112],['4',1144.5],['5',1171],['7',1197.5],['9',1223.5],['10',1250],['12',1282],['Mon',1329],['4',1373],['6',1400],['8',1426],['9',1453],['11',1480]],
    draw() {
      const spike = z11([[[597,470],[597,715]]])[0];
      return rect(spike[0][0], spike[0][1], 1, spike[1][1] - spike[0][1], RED) + walk(z11([
        [[28,800],[45,850],[60,800],[75,790],[80,900],[88,990],[105,1030],[125,1020],[140,1110],[150,1040],[160,920],[165,1000],[175,1090],[185,960],[195,1040],[205,1060]],
        [[212,520],[225,510],[240,490],[255,590],[270,550],[290,450],[315,450],[345,510],[385,470],[400,510],[430,570],[455,620],[470,690],[470,860],[480,930],[490,1050],[505,1170],[515,1190],[522,1260],[530,1110],[545,980],[558,900],[565,800],[572,680],[582,560],[590,450],[605,240],[620,340],[640,260],[670,200],[685,260],[695,350],[702,520],[712,570],[720,410],[735,430],[745,470],[765,400],[780,470],[790,540],[800,590],[822,520],[830,610],[850,500]],
        [[860,712],[885,770],[915,740],[930,740],[955,790],[985,790],[1005,820],[1035,780],[1065,830],[1080,770],[1110,715],[1130,750],[1160,765]],
        [[1168,830],[1185,900],[1200,1020],[1220,870],[1240,810],[1252,765],[1265,920],[1280,1020],[1300,1070],[1320,1110],[1330,1155],[1348,1170]]
      ]), { noise: 6, w: 2, pitch: 1.5, gray: .02 });
    },
    bubbles: [{ t: 'Hi: 23.76', x: 1261, y: 637, w: 56, px: 1267, py: 663 }],
    tags: [{ t: '19.36', x: 1515, y: 979, c: 'green' }]
  },
  pcnd: {
    hg: [642,683,724,764,806,846,887,927],
    vd: [1649,1726,1802],
    yl: [['0.8',642],['0.75',683],['0.7',724],['0.65',764],['0.6',806],['0.55',846],['0.5',887],['0.45',927]],
    xl: [['Thu',1649],['Fri',1726],['Mon',1802]],
    draw() {
      return walk(ref([
        [[1293,525],[1297,530],[1300,553],[1310,545],[1325,535],[1340,528],[1347,520]],
        [[1349,720],[1352,670],[1360,630],[1370,600],[1385,592],[1395,598],[1400,580],[1408,530],[1410,505],[1412,590],[1412,688],[1416,540],[1425,522],[1440,518],[1455,525],[1465,520],[1471,507]],
        [[1473,760],[1475,680],[1485,635],[1490,620],[1500,612],[1507,610]]
      ]), { noise: 2.5, w: 2, pitch: 1.5 });
    },
    tags: [{ t: '0.67', x: 1862, y: 739, c: 'green' }]
  },
  pcndVol: {
    hg: [987,1015], vd: [1649,1726,1802],
    yl: [['200',987],['100',1015]],
    draw() {
      return volBars([[1583,1648,1022,990,.6,.6],[1650,1724,1035,980,.8,.5],[1727,1800,1030,966,.4,.7],[1803,1846,1035,1010,.7,.7]], 1041, 1.25);
    }
  }
};

function build(plot) {
  const cfg = CHARTS[plot.dataset.chart], panel = plot.closest('.panel');
  const axis = panel.querySelector('.axis'), time = panel.querySelector('.time');
  const b = plot.getBoundingClientRect(), pb = panel.getBoundingClientRect();
  const ax = axis.getBoundingClientRect(), tb = time.getBoundingClientRect();
  let s = '';
  (cfg.bands || []).forEach(([a, c]) => s += rect(a, b.top, c - a, b.height, BAND));
  let g = '';
  (cfg.hg || []).forEach(y => g += `<path d="M${b.left} ${Math.round(y) + .5}H${b.right}" stroke="${GRID}" stroke-dasharray="1 5"/>`);
  (cfg.vg || []).forEach(x => {
    const px = Math.round(x) + .5;
    g += `<path d="M${px} ${b.top}V${b.bottom}" stroke="${GRID}" stroke-dasharray="1 5"/>`;
    g += `<path d="M${px} ${b.top}v3M${px} ${b.bottom - 3}v3" stroke="${GRID}"/>`;
  });
  (cfg.vd || []).forEach(x => g += `<path d="M${Math.round(x) + .5} ${b.top}V${b.bottom}" stroke="#6a6a6a" stroke-dasharray="4 2"/>`);
  s += g;
  (cfg.hl || []).forEach(([y, c, x0, x1, dash, sw]) => {
    s += `<path d="M${x0} ${Math.round(y) + .5}H${x1}" stroke="${c}" stroke-width="${sw || 1}" ${dash ? `stroke-dasharray="${dash}"` : ''}/>`;
  });
  if (cfg.draw) s += `<g class="crisp">${cfg.draw()}</g>`;
  (cfg.bubbles || []).forEach(u => {
    const above = u.py < u.y, edge = above ? u.y + 1 : u.y + 17;
    const ax0 = u.x + (u.px > u.x + u.w / 2 ? u.w - 12 : 6);
    s += `<polygon points="${u.px},${u.py} ${ax0},${edge} ${ax0 + 6},${edge}" fill="#cfcfcf"/>`;
  });
  const svg = document.createElementNS('http://www.w3.org/2000/svg', 'svg');
  svg.setAttribute('class', 'plotsvg');
  svg.setAttribute('width', b.width);
  svg.setAttribute('height', b.height);
  svg.setAttribute('viewBox', `${b.left} ${b.top} ${b.width} ${b.height}`);
  svg.innerHTML = s;
  plot.insertBefore(svg, plot.firstChild);

  const span = (cls, text, parent, left, top) => {
    const e = document.createElement('span');
    e.className = cls; e.textContent = text;
    if (left != null) e.style.left = left + 'px';
    if (top != null) e.style.top = top + 'px';
    parent.appendChild(e);
    return e;
  };
  (cfg.yl || []).forEach(([t, y]) => span('ylab', t, axis, null, y - ax.top));
  (cfg.xl || []).forEach(([t, x]) => span('xlab', t, time, x - tb.left));
  (cfg.bubbles || []).forEach(u => { span('bubble', u.t, panel, u.x - pb.left, u.y - pb.top).style.width = u.w + 'px'; });
  (cfg.tags || []).forEach(u => span('ptag ' + u.c, u.t, panel, u.x - pb.left, u.y - pb.top));
}

document.querySelectorAll('.plot[data-chart]').forEach(build);
```
